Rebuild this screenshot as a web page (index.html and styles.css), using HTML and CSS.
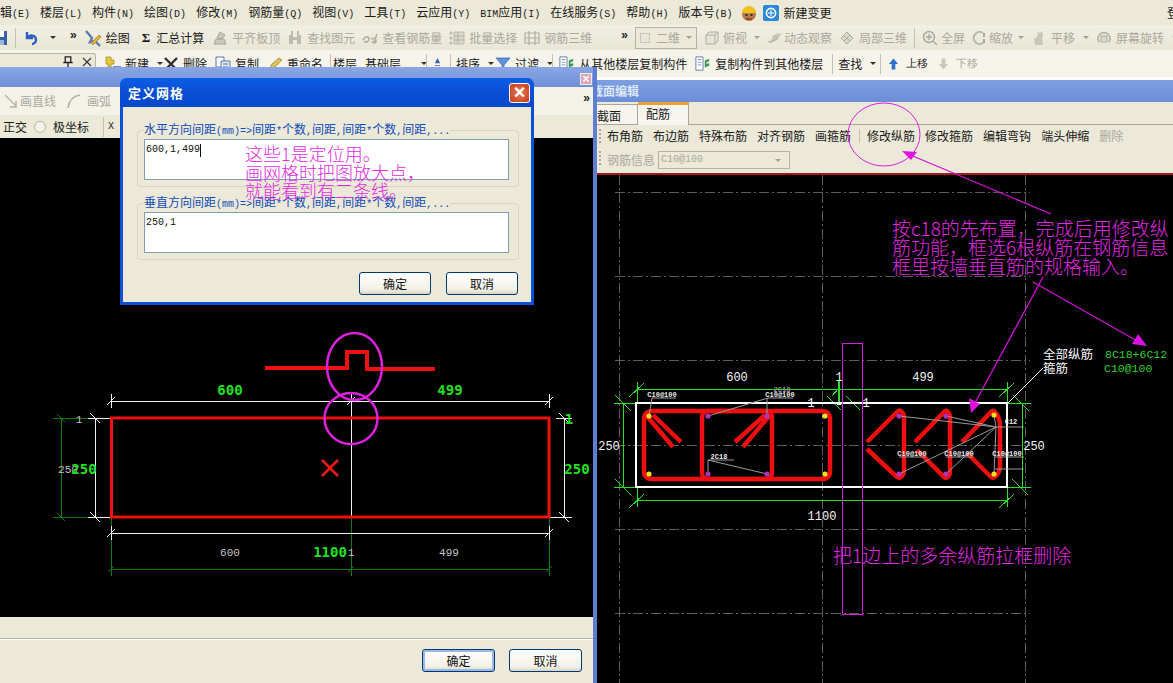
FILE: index.html
```html
<!DOCTYPE html>
<html lang="zh">
<head>
<meta charset="utf-8">
<title>定义网格</title>
<link rel="stylesheet" href="styles.css">
</head>
<body>
<svg class="sprite" aria-hidden="true">
  <symbol id="i-save" viewBox="0 0 16 16"><rect x="1" y="1" width="14" height="14" fill="#3a62a8"/><rect x="4" y="1" width="8" height="6" fill="#fff"/><rect x="4" y="10" width="8" height="5" fill="#9db4d8"/></symbol>
  <symbol id="i-undo" viewBox="0 0 16 16"><path d="M4 2v6h6M4 8c3-4 9-3 9 2 0 2-2 4-4 4" fill="none" stroke="#2f5fc0" stroke-width="2.4"/></symbol>
  <symbol id="i-draw" viewBox="0 0 18 18"><path d="M2 2l6 7-2 4 5-1 5 5" fill="none" stroke="#5a7fb0" stroke-width="2.4"/><path d="M7 14l8-8 2 2-8 8z" fill="#e8b23a" stroke="#7a6a2a" stroke-width=".6"/></symbol>
  <symbol id="i-g1" viewBox="0 0 16 16"><path d="M2 14h12l-2-5H4zM5 8l3-6 5 3-3 4z" fill="#c9c7ba" stroke="#a9a79b"/></symbol>
  <symbol id="i-g2" viewBox="0 0 16 16"><path d="M2 5h4v9H2zM10 5h4v9h-4zM4 1h2v4H4zM10 1h2v4h-2zM6 7h4v3H6z" fill="#bdbbad"/></symbol>
  <symbol id="i-g3" viewBox="0 0 16 16"><path d="M1 10c2-4 6-4 6-1s-4 4-5 2M15 4l-3 8m-3-3c2-1 5-1 5 2s-4 2-4 0" fill="none" stroke="#b3b1a4" stroke-width="1.6"/></symbol>
  <symbol id="i-g4" viewBox="0 0 16 16"><path d="M1 2h2v2H1zM1 7h2v2H1zM1 12h2v2H1zM5 2h10v12H5z" fill="#dcdacc" stroke="#b3b1a4" stroke-width=".8"/><path d="M5 6h10M5 10h10M9 2v12" stroke="#b3b1a4"/></symbol>
  <symbol id="i-g5" viewBox="0 0 16 16"><path d="M1 3h14v10H1zM1 8h14M5 1v14M11 1v14" fill="none" stroke="#aeac9f" stroke-width="1.2"/></symbol>
  <symbol id="i-cube" viewBox="0 0 16 16"><path d="M2 5h9v9H2zM2 5l3-3h9l-3 3M11 14l3-3V2" fill="#e6e4d8" stroke="#aeac9f"/></symbol>
  <symbol id="i-orbit" viewBox="0 0 18 16"><path d="M3 14l4-9 7-3-2 8z" fill="#c6c4b6"/><path d="M1 12c4 2 10-2 15-9" fill="none" stroke="#a9a79b"/></symbol>
  <symbol id="i-part" viewBox="0 0 16 16"><path d="M2 8l6-6 6 6-6 6z" fill="#dcdacc" stroke="#aeac9f"/><path d="M5 6l6 5M11 5l-6 6" stroke="#aeac9f"/></symbol>
  <symbol id="i-zoom" viewBox="0 0 16 16"><circle cx="7" cy="7" r="5.5" fill="#e8e6da" stroke="#a9a79b" stroke-width="1.4"/><path d="M11 11l4 4M7 4v6M4 7h6" stroke="#a9a79b" stroke-width="1.3"/></symbol>
  <symbol id="i-zoom2" viewBox="0 0 16 16"><path d="M11 3A6 6 0 1 0 11 13" fill="none" stroke="#b9b7aa" stroke-width="2"/><path d="M12 3v4M12 9v4" stroke="#a9a79b" stroke-width="2"/></symbol>
  <symbol id="i-hand" viewBox="0 0 16 16"><path d="M4 15l-1-6 3-2 1-5 2 1 2-2 1 4-1 4 1 6z" fill="#c9c7ba"/></symbol>
  <symbol id="i-rot" viewBox="0 0 16 16"><path d="M3 12A6 6 0 1 1 13 12" fill="none" stroke="#b3b1a4" stroke-width="1.8"/><rect x="5" y="6" width="6" height="6" fill="#dcdacc" stroke="#a9a79b"/></symbol>
  <symbol id="i-new" viewBox="0 0 16 16"><path d="M1 1h5v3h3v4H6v3H3V8H1z" fill="#e8c63a" stroke="#9a8420" stroke-width=".7"/><rect x="8" y="10" width="8" height="4" fill="#6d8fc8"/></symbol>
  <symbol id="i-x" viewBox="0 0 16 16"><path d="M2 2l12 12M14 2L2 14" stroke="#303030" stroke-width="2.4"/></symbol>
  <symbol id="i-copy" viewBox="0 0 16 16"><path d="M1 1h8v10H1z" fill="#fff" stroke="#5a78a8"/><path d="M6 5h9v10H6z" fill="#dfe8f6" stroke="#5a78a8"/><path d="M8 8h5M8 11h5" stroke="#5a78a8"/></symbol>
  <symbol id="i-ren" viewBox="0 0 16 16"><path d="M2 13l3-5 7-6 3 2-7 7z" fill="#dcc45a" stroke="#8a7a30" stroke-width=".7"/><path d="M1 15h14" stroke="#6aa35a" stroke-width="2"/></symbol>
  <symbol id="i-sort" viewBox="0 0 12 16"><path d="M6 1l-3 6h6zM3 9h6v1H3zM3 12h6v1H3z" fill="#3a62a8"/></symbol>
  <symbol id="i-filter" viewBox="0 0 16 16"><path d="M1 2h14L9 9v6l-2-2V9z" fill="#5f92de" stroke="#3a62a8" stroke-width=".7"/></symbol>
  <symbol id="i-doc" viewBox="0 0 18 18"><path d="M1 1h8v15H1z" fill="#fff" stroke="#5a78a8"/><path d="M3 4h4M3 7h4M3 10h4" stroke="#6c8ab8"/><path d="M11 5l5-2v3l-3 1v2l3-1v3l-5 2z" fill="#3f9a5a"/></symbol>
  <symbol id="i-up" viewBox="0 0 12 14"><path d="M6 1l5 6H8v6H4V7H1z" fill="#2f6fd0"/></symbol>
  <symbol id="i-down" viewBox="0 0 12 14"><path d="M6 13L1 7h3V1h4v6h3z" fill="#c9c7ba"/></symbol>
  <symbol id="i-line" viewBox="0 0 16 16"><path d="M2 2l11 11M13 8v6H7" fill="none" stroke="#b3b1a4" stroke-width="1.4"/></symbol>
  <symbol id="i-arc" viewBox="0 0 16 16"><path d="M2 15C3 8 7 3 14 2" fill="none" stroke="#b3b1a4" stroke-width="1.6"/></symbol>
  <symbol id="i-pin" viewBox="0 0 12 14"><path d="M3 1h6v6H3zM1 7h10M6 7v6" fill="none" stroke="#222" stroke-width="1.4"/></symbol>
  <symbol id="i-close" viewBox="0 0 12 12"><path d="M2 2l8 8M10 2l-8 8" stroke="#333" stroke-width="1.1"/></symbol>
</svg>

<header class="app-top">
  <nav class="menu">
    <span class="m">辑<span class="k">(E)</span></span>
    <span class="m">楼层<span class="k">(L)</span></span>
    <span class="m">构件<span class="k">(N)</span></span>
    <span class="m">绘图<span class="k">(D)</span></span>
    <span class="m">修改<span class="k">(M)</span></span>
    <span class="m">钢筋量<span class="k">(Q)</span></span>
    <span class="m">视图<span class="k">(V)</span></span>
    <span class="m">工具<span class="k">(T)</span></span>
    <span class="m">云应用<span class="k">(Y)</span></span>
    <span class="m"><span class="k">BIM</span>应用<span class="k">(I)</span></span>
    <span class="m">在线服务<span class="k">(S)</span></span>
    <span class="m">帮助<span class="k">(H)</span></span>
    <span class="m">版本号<span class="k">(B)</span></span>
    <svg class="avatar" viewBox="0 0 18 18"><circle cx="9" cy="10" r="7" fill="#b57a4a"/><path d="M2 9a7 7 0 0 1 14 0z" fill="#f0c020"/><circle cx="6.500" cy="11" r="1.100" fill="#222"/><circle cx="11.500" cy="11" r="1.100" fill="#222"/><path d="M6 15h6" stroke="#7a3a2a" stroke-width="1.400"/></svg>
    <svg class="badge" viewBox="0 0 16 16"><rect width="16" height="16" rx="2" fill="#2a8ad8"/><circle cx="8" cy="8" r="4.600" fill="none" stroke="#fff" stroke-width="1.600"/><path d="M5 8h6M8 5v6" stroke="#fff"/></svg>
    <span class="m m-change">新建变更</span>
    <span class="m m-edge">登</span>
  </nav>

  <div class="bar bar1">
    <svg class="ic ic-save"><use href="#i-save"/></svg>
    <i class="sep sep-a"></i>
    <svg class="ic"><use href="#i-undo"/></svg><i class="dd dd-dark"></i>
    <b class="more more-a">»</b>
    <span class="t"><svg class="ic ic-l"><use href="#i-draw"/></svg>绘图</span>
    <span class="t t-sum"><b class="sigma">Σ</b>汇总计算</span>
    <span class="t off t-level"><svg class="ic"><use href="#i-g1"/></svg>平齐板顶</span>
    <span class="t off"><svg class="ic"><use href="#i-g2"/></svg>查找图元</span>
    <span class="t off"><svg class="ic"><use href="#i-g3"/></svg>查看钢筋量</span>
    <span class="t off"><svg class="ic"><use href="#i-g4"/></svg>批量选择</span>
    <span class="t off"><svg class="ic"><use href="#i-g5"/></svg>钢筋三维</span>
    <b class="more more-b">»</b>
    <span class="combo"><i class="swatch"></i>二维<i class="dd"></i></span>
    <span class="t off t-n"><svg class="ic"><use href="#i-cube"/></svg>俯视<i class="dd"></i></span>
    <span class="t off t-n2"><svg class="ic"><use href="#i-orbit"/></svg>动态观察</span>
    <span class="t off"><svg class="ic"><use href="#i-part"/></svg>局部三维</span>
    <i class="sep"></i>
    <span class="t off t-n"><svg class="ic"><use href="#i-zoom"/></svg>全屏</span>
    <span class="t off t-n2"><svg class="ic"><use href="#i-zoom2"/></svg>缩放<i class="dd"></i></span>
    <span class="t off"><svg class="ic"><use href="#i-hand"/></svg>平移<i class="dd"></i></span>
    <span class="t off"><svg class="ic"><use href="#i-rot"/></svg>屏幕旋转<i class="dd"></i></span>
  </div>

  <div class="bar bar2">
    <div class="panel-tab"><svg class="pin"><use href="#i-pin"/></svg><svg class="close-x"><use href="#i-close"/></svg></div>
    <span class="t t-new"><svg class="ic"><use href="#i-new"/></svg>新建<i class="dd dd-dark"></i></span>
    <span class="t"><svg class="ic"><use href="#i-x"/></svg>删除</span>
    <span class="t"><svg class="ic"><use href="#i-copy"/></svg>复制</span>
    <span class="t"><svg class="ic"><use href="#i-ren"/></svg>重命名</span>
    <i class="sep sep-first"></i>
    <span class="t">楼层</span>
    <span class="t t-floor">基础层<i class="dd dd-dark"></i></span>
    <i class="sep"></i>
    <svg class="ic ic-s"><use href="#i-sort"/></svg>
    <i class="sep"></i>
    <span class="t">排序<i class="dd dd-dark"></i></span>
    <span class="t t-p1"><svg class="ic"><use href="#i-filter"/></svg>过滤<i class="dd dd-dark"></i></span>
    <i class="sep"></i>
    <span class="t t-p1"><svg class="ic"><use href="#i-doc"/></svg>从其他楼层复制构件</span>
    <span class="t"><svg class="ic"><use href="#i-doc"/></svg>复制构件到其他楼层</span>
    <i class="sep sep-copy"></i>
    <span class="t">查找<i class="dd dd-dark"></i></span>
    <i class="sep sep-find"></i>
    <span class="t t-w"><svg class="ic ic-s"><use href="#i-up"/></svg>上移</span>
    <span class="t off t-w"><svg class="ic ic-s"><use href="#i-down"/></svg>下移</span>
  </div>
</header>

<section class="win win-left">
  <div class="win-title"><span class="win-close">×</span></div>
  <div class="l-tools">
    <span class="t off t-line"><svg class="ic"><use href="#i-line"/></svg>画直线</span>
    <span class="t off t-arc"><svg class="ic"><use href="#i-arc"/></svg>画弧</span>
    <b class="more more-r">»</b>
  </div>
  <div class="l-opts">
    <span>正交</span><i class="radio"></i><span>极坐标</span><i class="sep"></i><span class="k">X</span>
  </div>
  <div class="canvas">
    <svg class="cad" viewBox="0 138 593 479" width="593" height="479">
      <g class="g-thin">
        <path d="M53 418H111M53 517H111M61 418V517M111 517V576M351 517V576M549 517V576M111 569H549"/>
        <path d="M108 572l6-6M348 572l6-6M546 572l6-6M57 414l8 8M57 513l8 8"/>
      </g>
      <g class="w-thin">
        <path d="M111 401H549M111 533H549M95 418V517M564 418V517M351 394V517M111 394V408M549 394V408M111 526V540M549 526V540"/>
        <path d="M88 418H111M88 517H111M549 517H572M556 418H572"/>
        <path d="M107 405l8-8M347 405l8-8M545 405l8-8M107 537l8-8M545 537l8-8M90 413l10 10M90 512l10 10M559 413l10 10M559 512l10 10"/>
      </g>
      <rect class="red" x="111.500" y="418" width="437.500" height="99"/>
      <path class="red red-p" d="M265 368H347V352H367V369H435"/>
      <path class="red-x" d="M322 460l16 16M338 460l-16 16"/>
      <ellipse class="mag-e" cx="354.500" cy="366.500" rx="27.500" ry="33.500"/>
      <ellipse class="mag-e" cx="351" cy="418.500" rx="26.500" ry="25.500"/>
      <text class="t-g" x="230" y="395">600</text>
      <text class="t-g" x="450" y="395">499</text>
      <text class="t-w" x="68" y="473">250</text>
      <text class="t-g" x="84" y="474">250</text>
      <text class="t-g" x="577" y="474">250</text>
      <text class="t-g" x="330" y="557">1100</text>
      <text class="t-w" x="230" y="556">600</text>
      <text class="t-w" x="449" y="556">499</text>
      <text class="t-w" x="351" y="556">1</text>
      <text class="t-w" x="79" y="423">1</text>
      <text class="t-g" x="569" y="424">1</text>
    </svg>
  </div>
  <div class="l-gap"></div>
  <div class="l-foot">
    <button class="btn btn-def">确定</button>
    <button class="btn">取消</button>
  </div>
</section>

<section class="win win-right">
  <div class="r-title"><span>截面编辑</span></div>
  <div class="tabs">
    <span class="tab">截面</span>
    <span class="tab tab-on">配筋</span>
  </div>
  <div class="r-tools">
    <i class="grip"></i>
    <span>布角筋</span><span>布边筋</span><span>特殊布筋</span><span>对齐钢筋</span><span>画箍筋</span>
    <i class="sep"></i>
    <span>修改纵筋</span><span>修改箍筋</span><span>编辑弯钩</span><span>端头伸缩</span><span class="off">删除</span>
  </div>
  <div class="r-info">
    <i class="grip"></i>
    <span class="off">钢筋信息</span>
    <span class="sel"><span class="k">C10@100</span><i class="dd"></i></span>
  </div>
  <div class="canvas canvas-r">
    <svg class="cad" viewBox="597 175 576 508" width="576" height="508">
      <g class="grid">
        <path d="M615 192H1030M615 276H1030M615 360H1030M615 445H1030M615 529H1030M615 613H1030"/>
        <path d="M619 175V683M822 175V683M1025 175V683"/>
      </g>
      <g class="gr">
        <path d="M637 389H1007M637 500H1007M623 403V487M1022 403V487M637 382V403M1007 382V403M637 487V507M1007 487V507M614 403H636M614 487H636M1007 403H1031M1007 487H1031"/>
        <path d="M629 397l15-14M999 397l15-14M629 508l15-14M999 508l15-14M615 395l16 16M615 479l16 16M1013 395l16 16M1012 479l16 16"/>
        <path class="gr-b" d="M839 380V403M816 403H862"/>
        <path d="M832 396l7-8M827 396l14 14M846 396l14 14"/>
      </g>
      <rect class="wh" x="636" y="403" width="371" height="84"/>
      <rect class="wh-dot" x="837" y="402" width="4" height="3"/>
      <g class="rebar">
        <rect x="644" y="411" width="186" height="68" rx="7"/>
        <rect x="702" y="411" width="70" height="68" rx="6"/>
        <path d="M646 415L673 447M653 415L681 442M770 415L743 447M765 415L735 442"/>
        <path d="M867 442L897 412Q900 409 902 412Q904 414 904 418V470Q904 475 901 477Q899 479 896 476L867 449"/>
        <path d="M915 442L943 413Q946 409 948 412Q950 414 950 418V470Q950 475 948 477Q945 479 943 476L917 450"/>
        <path d="M962 442L990 413Q993 409 995 412Q1000 418 1000 426V466Q1000 472 996 476Q993 479 990 476L967 453"/>
      </g>
      <g class="leader">
        <path d="M649 416L652 398H676M708 416L768 398H793M767 416V398M708 474V460H734M708 460L767 474M899 416L996 427M946 416L996 427M994 415L996 427M899 474L996 427M946 474L996 427M994 474L996 427M996 427H1024M899 457H926M946 457H973M995 457H1024M995 469H1024"/>
      </g>
      <g class="dots-y"><circle cx="649" cy="416" r="2.600"/><circle cx="825" cy="416" r="2.600"/><circle cx="649" cy="474" r="2.600"/><circle cx="825" cy="474" r="2.600"/><circle cx="994" cy="415" r="2.600"/><circle cx="994" cy="474" r="2.600"/></g>
      <g class="dots-p"><circle cx="708" cy="416" r="2.600"/><circle cx="767" cy="416" r="2.600"/><circle cx="708" cy="474" r="2.600"/><circle cx="767" cy="474" r="2.600"/><circle cx="899" cy="416" r="2.600"/><circle cx="946" cy="416" r="2.600"/><circle cx="899" cy="474" r="2.600"/><circle cx="946" cy="474" r="2.600"/></g>
      <text class="t-w2" x="737" y="381">600</text>
      <text class="t-w2" x="923" y="381">499</text>
      <text class="t-w2" x="609" y="450">250</text>
      <text class="t-w2" x="1034" y="450">250</text>
      <text class="t-w2" x="822" y="520">1100</text>
      <text class="t-w2" x="839" y="381">1</text>
      <text class="t-w2" x="811" y="407">1</text>
      <text class="t-w2" x="866" y="407">1</text>
      <text class="t-xs" x="662" y="397">C10@100</text>
      <text class="t-xs t-dim" x="782" y="392">2C18</text>
      <text class="t-xs" x="780" y="397">C10@100</text>
      <text class="t-xs" x="719" y="459">2C18</text>
      <text class="t-xs" x="1011" y="424">C12</text>
      <text class="t-xs" x="912" y="456">C10@100</text>
      <text class="t-xs" x="959" y="456">C10@100</text>
      <text class="t-xs" x="1007" y="456">C10@100</text>
      <text class="t-cn" x="1043" y="359">全部纵筋</text>
      <text class="t-cn" x="1043" y="373">箍筋</text>
      <text class="t-gs" x="1105" y="358">8C18+6C12</text>
      <text class="t-gs" x="1104" y="372">C10@100</text>
      <path class="wh-thin" d="M1008 403L1043 368"/>
    </svg>
  </div>
</section>

<section class="dialog">
  <div class="d-title"><span>定义网格</span><span class="d-close">×</span></div>
  <div class="d-body">
    <fieldset class="grp">
      <legend>水平方向间距<span class="k">(mm)=&gt;</span>间距<span class="k">*</span>个数<span class="k">,</span>间距<span class="k">,</span>间距<span class="k">*</span>个数<span class="k">,</span>间距<span class="k">,...</span></legend>
      <div class="input k">600,1,499<i class="caret"></i></div>
    </fieldset>
    <fieldset class="grp">
      <legend>垂直方向间距<span class="k">(mm)=&gt;</span>间距<span class="k">*</span>个数<span class="k">,</span>间距<span class="k">,</span>间距<span class="k">*</span>个数<span class="k">,</span>间距<span class="k">,...</span></legend>
      <div class="input k">250,1</div>
    </fieldset>
    <div class="d-foot">
      <button class="btn">确定</button>
      <button class="btn">取消</button>
    </div>
  </div>
</section>

<svg class="overlay" viewBox="0 0 1173 683" width="1173" height="683">
  <ellipse class="o-e" cx="884" cy="134.500" rx="36" ry="31.500"/>
  <path class="o-l" d="M1051 214L908 154"/>
  <path class="o-h" d="M902 151L917 152L911 160z"/>
  <path class="o-l" d="M1033 282L1139 342"/>
  <path class="o-h" d="M1147 346L1132 344L1138 334z"/>
  <path class="o-l" d="M1043 277L975 403"/>
  <path class="o-h" d="M971 413L969 398L980 404z"/>
  <rect class="o-r" x="842.500" y="343.500" width="20" height="271"/>
  <text class="o-t o-d" x="245" y="161">这些1是定位用。</text>
  <text class="o-t o-d" x="245" y="180">画网格时把图放大点&#xFF0C;</text>
  <text class="o-t o-d" x="245" y="198">就能看到有二条线。</text>
  <text class="o-t" x="892" y="236">按c18的先布置&#xFF0C;完成后用修改纵</text>
  <text class="o-t" x="892" y="255">筋功能&#xFF0C;框选6根纵筋在钢筋信息</text>
  <text class="o-t" x="892" y="274">框里按墙垂直筋的规格输入。</text>
  <text class="o-t" x="833" y="563">把1边上的多余纵筋拉框删除</text>
</svg>
</body>
</html>
```

FILE: styles.css
```css
* { box-sizing: border-box; }
html, body { margin: 0; height: 100%; }
body {
  width: 1173px; height: 683px; overflow: hidden; position: relative;
  background: #fff;
  font: 12px/1 "Noto Sans CJK SC", "Liberation Sans", sans-serif;
  color: #1a1a1a;
}
i { font-style: normal; display: block; }
.sprite { display: none; }
.k { font-family: "Liberation Mono", monospace; font-size: 10px; }

/* top chrome */
.app-top { height: 80px; background: #fff; }
.menu { height: 25px; display: flex; align-items: center; gap: 10px; background: #ece9d8; position: relative; }
.m { white-space: nowrap; }
.avatar { width: 18px; height: 18px; margin-left: -2px; }
.badge { width: 16px; height: 16px; margin-left: -5px; }
.m-change { margin-left: -6px; }
.m-edge { margin-left: auto; margin-right: -6px; }

.bar { display: flex; align-items: center; gap: 7px; white-space: nowrap; overflow: hidden; }
.bar1 { height: 25px; background: linear-gradient(#f2f0e4, #e9e6d5); }
.bar2 { height: 27px; gap: 8px; background: #f5f3ea; }
.t { display: inline-flex; align-items: center; gap: 4px; }
.off { color: #aaa89c; }
.ic { width: 16px; height: 16px; flex: none; }
.ic-l { width: 18px; height: 18px; }
.ic-s { width: 11px; height: 14px; }
.ic-save { margin-left: -8px; }
.sep { width: 1px; height: 20px; background: #c4c1ae; flex: none; }
.bar2 .sep { margin: 0 -3px 0 -1px; }
.bar2 .sep-first { margin-right: -6px; }
.bar2 .sep-copy { margin-left: 1px; }
.bar2 .sep-find { margin-left: 4px; }
.bar1 .sep-a { margin: 0; }
.dd { width: 0; height: 0; border: 3px solid transparent; border-top: 3px solid #a0a094; border-bottom: 0; margin-left: 4px; flex: none; }
.dd-dark { border-top-color: #333; }
.bar2 .dd-dark { margin-right: -8px; }
.more { font: bold 12px "Liberation Sans", sans-serif; color: #222; }
.more-a { margin: -6px 0 0 7px; }
.more-b { margin: -6px 0 0 22px; }
.sigma { font: bold 13px "Liberation Serif", serif; margin: 0 2px 0 2px; }
.t-sum { margin-left: 3px; }
.t-level { margin-left: 1px; }
.t-n { gap: 3px; }
.t-n2 { gap: 1px; }
.combo { display: inline-flex; align-items: center; width: 62px; height: 22px; border: 1px solid #b4b2a3; color: #aaa89c; background: #ece9d8; padding: 0 4px; gap: 6px; }
.combo .dd { margin-left: auto; }
.swatch { width: 13px; height: 10px; background: #e8e6da; border: 1px solid #c6c4b6; }
.panel-tab { width: 96px; height: 24px; align-self: flex-start; margin-top: 3px; flex: none; display: flex; justify-content: flex-end; align-items: flex-start; gap: 7px; padding: 2px 2px 0 0; background: #ece9d8; border: 1px solid #b8b59e; border-left: 0; border-bottom: 0; border-radius: 0 3px 0 0; }
.pin { width: 12px; height: 13px; }
.close-x { width: 12px; height: 12px; }
.t-new { margin-left: 1px; }
.t-floor .dd { margin-left: 16px; }
.t-p1 { margin-left: 1px; }
.t-w { gap: 7px; margin-left: 2px; }

/* left window */
.win { position: absolute; display: flex; flex-direction: column; background: #ece9d8; }
.win-left { left: 0; top: 67px; width: 597px; height: 616px; border-right: 4px solid #5f7ed0; }
.win-title { height: 20px; background: linear-gradient(#8aa6e4, #6f8fd8); flex: none; position: relative; }
.win-close { position: absolute; right: 1px; top: 6px; width: 12px; height: 12px; background: #d9a6ba; border: 1px solid #eee; color: #fff; font: bold 12px/10px "Liberation Sans", sans-serif; text-align: center; }
.l-tools { height: 28px; flex: none; display: flex; align-items: center; background: #f4f2e8; padding-left: 3px; position: relative; }
.t-line { gap: 1px; }
.t-arc { gap: 5px; margin-left: 10px; }
.more-r { margin: -6px 3px 0 auto; }
.l-opts { height: 23px; flex: none; display: flex; align-items: center; gap: 7px; padding-left: 3px; background: #ece9d8; }
.l-opts .sep { margin-left: 7px; margin-right: -3px; }
.radio { width: 12px; height: 12px; border: 1px solid #b8b59e; border-radius: 50%; background: #f4f2e8; }
.canvas { background: #000; flex: none; height: 479px; }
.cad { display: block; }
.l-gap { height: 22px; flex: none; border-bottom: 1px solid #b4b2a3; }
.l-foot { flex: 1; display: flex; justify-content: flex-end; gap: 14px; padding: 9px 11px 0 0; border-top: 1px solid #fff; }
.btn { width: 72px; height: 23px; padding: 0; font: 12px "Noto Sans CJK SC", sans-serif; color: #111; background: linear-gradient(#fff, #f2f0e6 80%, #d8d4c4); border: 1px solid #003c74; border-radius: 3px; }
.l-foot .btn { width: 73px; }
.btn-def { box-shadow: inset 0 0 0 2px #9db8e6; }

/* right window */
.win-right { left: 597px; top: 80px; width: 576px; height: 603px; }
.r-title { height: 22px; flex: none; background: linear-gradient(#7d9fe2, #6b8ed8); color: #dfe8fb; font: bold 12px/22px "Noto Sans CJK SC", sans-serif; overflow: hidden; }
.r-title span { display: block; margin-left: -6px; }
.tabs { height: 23px; flex: none; display: flex; align-items: flex-end; border-bottom: 1px solid #a8a694; }
.tab { height: 20px; width: 41px; padding: 5px 0 0 0; background: #f6f4ec; border: 1px solid #a8a694; border-left: 0; border-bottom: 0; }
.tab-on { height: 23px; width: 51px; background: #f6f5ef; border-top: 3px solid #f0a030; margin-bottom: -1px; padding: 3px 0 0 8px; }
.r-tools { height: 22px; flex: none; display: flex; align-items: center; gap: 10px; padding-left: 10px; position: relative; }
.r-tools .sep { height: 14px; margin: 0 -3px 0 -2px; }
.r-info { height: 26px; flex: none; display: flex; align-items: center; gap: 3px; padding-left: 10px; position: relative; }
.grip { position: absolute; left: 2px; top: 4px; width: 2px; height: 14px; background: repeating-linear-gradient(#aaa89c 0 2px, transparent 2px 4px); }
.sel { width: 132px; height: 18px; display: flex; align-items: center; padding: 0 8px 0 2px; border: 1px solid #b4b2a3; color: #aaa89c; background: #ece9d8; }
.sel .dd { margin-left: auto; }
.canvas-r { border-top: 2px solid #a01818; height: auto; flex: 1; }

/* dialog */
.dialog { position: absolute; left: 120px; top: 78px; width: 414px; height: 227px; display: flex; flex-direction: column; background: #0a50d8; border-radius: 7px 7px 0 0; padding: 0 3px 3px; }
.d-title { height: 29px; flex: none; display: flex; align-items: center; justify-content: space-between; color: #fff; font-weight: bold; font-size: 13px; background: linear-gradient(#0c5fe6, #0a50d8 40%, #0548cc); margin: 0 -3px; padding: 0 4px 0 8px; border-radius: 7px 7px 0 0; letter-spacing: 1px; }
.d-close { width: 21px; height: 20px; border: 1px solid #fff; border-radius: 3px; background: radial-gradient(#e87a50, #c63a1c); font: bold 20px/17px "Liberation Sans", sans-serif; text-align: center; letter-spacing: 0; }
.d-body { flex: 1; background: #ece9d8; display: flex; flex-direction: column; padding: 15px 12px 0 14px; gap: 8px; }
.grp { margin: 0; padding: 0 9px 6px 6px; height: 65px; border: 1px solid #d8d4c2; border-radius: 4px; min-width: 0; }
.grp legend { padding: 0; margin-left: 0; color: #0f4bb8; line-height: 14px; white-space: nowrap; }
.input { height: 41px; background: #fff; border: 1px solid #7f9db9; padding: 4px 1px; color: #111; line-height: 12px; display: flex; align-items: flex-start; }
.caret { width: 1px; height: 13px; background: #111; }
.d-foot { display: flex; justify-content: flex-end; gap: 15px; padding-right: 1px; margin-top: 4px; }

/* CAD text and strokes */
.cad text { text-anchor: middle; }
.g-thin path { fill: none; stroke: #0e7a10; stroke-width: 1; shape-rendering: crispEdges; }
.w-thin path { fill: none; stroke: #f0f0f0; stroke-width: 1; shape-rendering: crispEdges; }
.red { fill: none; stroke: #f01010; stroke-width: 3; }
.red-p { stroke-width: 4; }
.red-x { fill: none; stroke: #f01818; stroke-width: 2.500; }
.mag-e { fill: none; stroke: #e020e0; stroke-width: 2.500; }
.t-g { font: bold 14px "DejaVu Sans Mono", monospace; fill: #22e022; }
.t-w { font: 11px "Liberation Mono", monospace; fill: #c4c4c4; }
.grid path { fill: none; stroke: #5c5c5c; stroke-width: 1; stroke-dasharray: 10 3 2 3; shape-rendering: crispEdges; }
.gr path { fill: none; stroke: #2ae02a; stroke-width: 1; shape-rendering: crispEdges; }
.gr .gr-b { stroke-width: 2; }
.wh { fill: none; stroke: #fff; stroke-width: 2; }
.wh-dot { fill: #fff; }
.wh-thin { fill: none; stroke: #fff; stroke-width: 1; }
.rebar rect, .rebar path { fill: none; stroke: #ee1010; stroke-width: 4.500; }
.leader path { fill: none; stroke: #9a9a9a; stroke-width: 1; }
.dots-y circle { fill: #f4e020; }
.dots-p circle { fill: #b030c0; }
.t-w2 { font: 12px "Liberation Mono", monospace; fill: #f4f4f4; }
.t-xs { font: bold 7px "Liberation Mono", monospace; fill: #e8e8e8; }
.t-dim { fill: #9a9a9a; }
.cad .t-cn { font: 12.500px "Noto Sans CJK SC", sans-serif; fill: #f8f8f8; text-anchor: start; }
.cad .t-gs { font: 11.500px "Liberation Mono", monospace; fill: #30d030; text-anchor: start; }

/* annotation layer */
.overlay { position: absolute; left: 0; top: 0; pointer-events: none; }
.o-e { fill: none; stroke: #e020e0; stroke-width: 1; }
.o-l { fill: none; stroke: #d010d8; stroke-width: 1.300; }
.o-h { fill: #e010e0; }
.o-r { fill: none; stroke: #d820d8; stroke-width: 1; }
.o-t { font: 300 19px "Noto Sans CJK SC", sans-serif; fill: #e428e4; }
.o-d { font-size: 18px; }
```
